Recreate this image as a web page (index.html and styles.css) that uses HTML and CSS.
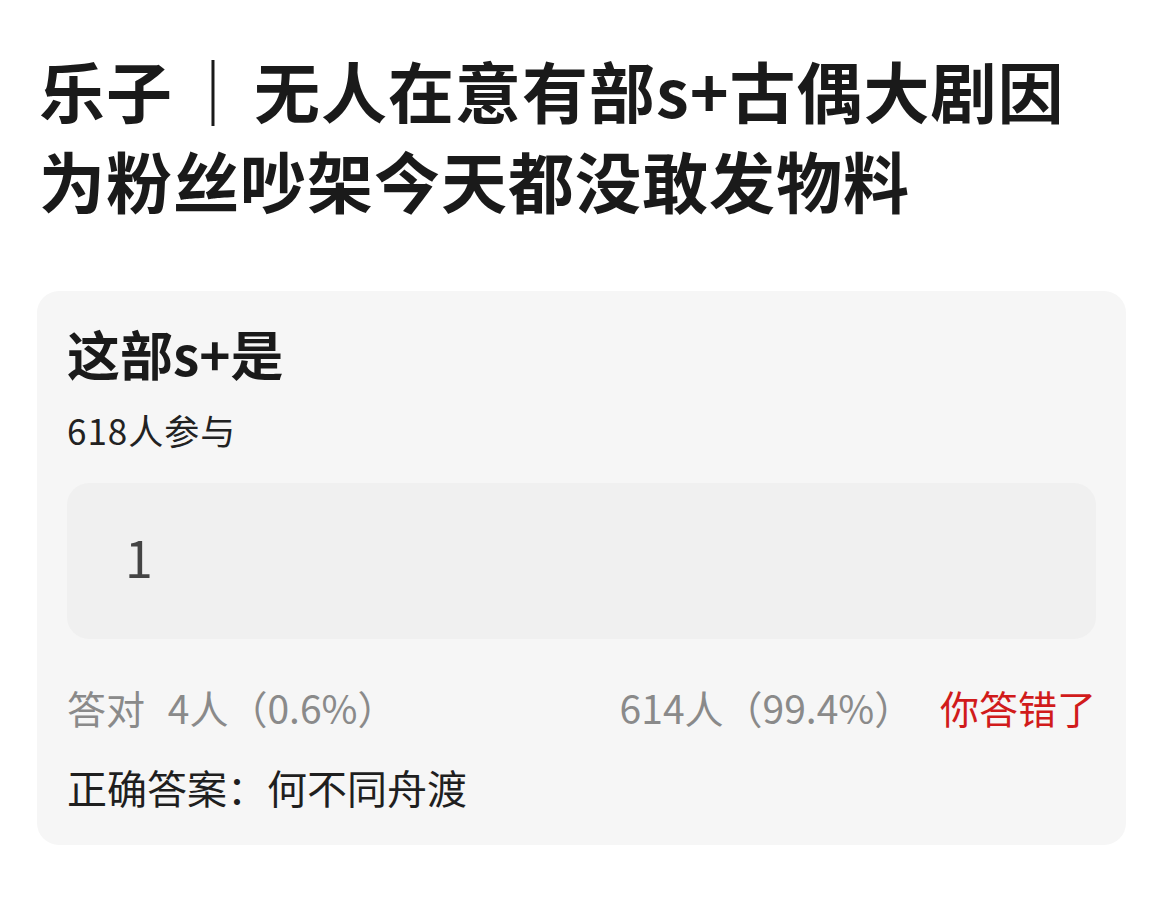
FILE: index.html
```html
<!DOCTYPE html>
<html lang="zh-CN">
<head>
  <meta charset="UTF-8">
  <meta name="viewport" content="width=device-width, initial-scale=1.0">
  <title>乐子 ｜ 无人在意有部s+古偶大剧</title>
  <link rel="stylesheet" href="styles.css">
</head>
<body>
  <div class="page">
    <h1 class="post-title">乐子 ｜ 无人在意有部s+古偶大剧因为粉丝吵架今天都没敢发物料</h1>

    <div class="quiz-card">
      <h2 class="quiz-question">这部s+是</h2>
      <div class="quiz-count">618人参与</div>

      <div class="quiz-option">
        <span>1</span>
      </div>

      <div class="quiz-stats">
        <div class="stats-right">
          <span>答对</span>
          <span class="stats-num">4人（0.6%）</span>
        </div>
        <div class="stats-wrong">
          <span>614人（99.4%）</span>
          <span class="wrong-tag">你答错了</span>
        </div>
      </div>

      <div class="quiz-answer">正确答案：何不同舟渡</div>
    </div>
  </div>
</body>
</html>
```

FILE: styles.css
```css
body {
  margin: 0;
  background-color: #fff;
  font-family: "Noto Sans CJK SC", "Noto Sans", sans-serif;
  color: #1c1c1c;
}

.page {
  padding: 44px 45px 40px 37px;
}

.post-title {
  margin: 0;
  padding-left: 2px;
  max-width: 1070px;
  font-size: 66px;
  line-height: 90px;
  letter-spacing: 1px;
  word-spacing: -9px;
  font-weight: 700;
  color: #1a1a1a;
}

.quiz-card {
  margin-top: 67px;
  background-color: #f6f6f6;
  border-radius: 22px;
  padding: 26px 30px 31px;
}

.quiz-question {
  margin: 0;
  font-size: 53px;
  line-height: 72px;
  font-weight: 700;
  color: #1a1a1a;
}

.quiz-count {
  margin-top: 18px;
  font-size: 35px;
  line-height: 46px;
  letter-spacing: 1px;
  color: #222;
}

.quiz-option {
  margin-top: 30px;
  height: 156px;
  box-sizing: border-box;
  display: flex;
  align-items: center;
  padding: 0 58px 10px;
  background-color: #f0f0f0;
  border-radius: 22px;
  font-size: 50px;
  color: #444;
}

.quiz-stats {
  margin-top: 41px;
  display: flex;
  justify-content: space-between;
  font-size: 39px;
  line-height: 54px;
  color: #8a8a8a;
}

.stats-num {
  margin-left: 14px;
}

.wrong-tag {
  margin-left: 18px;
  color: #d11b1b;
}

.quiz-answer {
  margin-top: 26px;
  font-size: 40px;
  line-height: 54px;
  color: #1f1f1f;
}
```
